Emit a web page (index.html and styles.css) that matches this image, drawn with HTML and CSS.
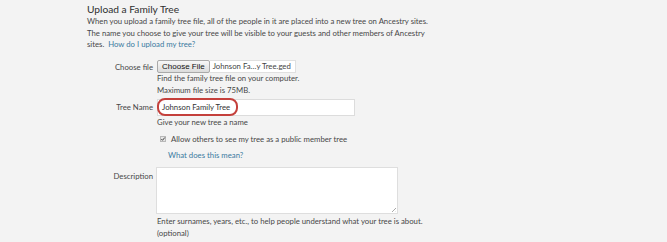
FILE: index.html
```html
<!DOCTYPE html>
<html>
<head>
<meta charset="utf-8">
<link rel="stylesheet" href="styles.css">
</head>
<body>
<div class="page">
  <h2 class="title">Upload a Family Tree</h2>
  <p class="intro">When you upload a family tree file, all of the people in it are placed into a new tree on Ancestry sites.<br>The name you choose to give your tree will be visible to your guests and other members of Ancestry<br>sites.&nbsp; <a class="link" href="#">How do I upload my tree?</a></p>

  <div class="form">
    <div class="label label-file">Choose file</div>
    <div class="field">
      <div class="file">
        <span class="file-btn">Choose File</span>
        <span class="file-name">Johnson Fa…y Tree.ged</span>
      </div>
      <div class="help">Find the family tree file on your computer.</div>
      <div class="help">Maximum file size is 75MB.</div>
    </div>

    <div class="label label-name">Tree Name</div>
    <div class="field">
      <div class="text-input">
        <span class="value">Johnson Family Tree</span>
        <span class="highlight"></span>
      </div>
      <div class="help help-name">Give your new tree a name</div>
      <div class="check-row">
        <span class="checkbox"><svg width="6" height="6" viewBox="0 0 6 6"><rect x="0.5" y="0.5" width="5" height="5" fill="#e6e6e6" stroke="#b8b8b8"/><path d="M1.3 3.1 L2.5 4.3 L4.8 1.5" fill="none" stroke="#444" stroke-width="1"/></svg></span>
        <span>Allow others to see my tree as a public member tree</span>
      </div>
      <div class="check-link"><a class="link" href="#">What does this mean?</a></div>
    </div>

    <div class="label label-desc">Description</div>
    <div class="field">
      <div class="textarea"><span class="grip"></span></div>
      <div class="help help-desc">Enter surnames, years, etc., to help people understand what your tree is about.</div>
      <div class="help help-opt">(optional)</div>
    </div>
  </div>
</div>
</body>
</html>
```

FILE: styles.css
```css
html, body {
  margin: 0;
  padding: 0;
  background: #f3f3f3;
}
body {
  font-family: Lato, "Noto Sans", sans-serif;
  color: #474747;
  font-size: 7.75px;
  overflow: hidden;
}
.page {
  padding: 2px 0 0 87px;
}
.title {
  margin: 0;
  font-size: 10.2px;
  font-weight: 400;
  color: #2f2f2f;
  line-height: 14px;
}
.intro {
  margin: 0;
  line-height: 11.7px;
}
.link {
  color: #3a7aa0;
  text-decoration: none;
}
.form {
  display: grid;
  grid-template-columns: 66px 1fr;
  column-gap: 4px;
  margin-top: 9px;
}
.label {
  text-align: right;
  line-height: 12px;
}
.label-file { padding-top: 0.5px; }
.label-name { padding-top: 5px; }
.label-desc { padding-top: 9px; }
.field {
  display: flex;
  flex-direction: column;
  align-items: flex-start;
}
.help {
  line-height: 11.5px;
}
.file {
  display: flex;
  align-items: stretch;
  height: 13px;
}
.file-btn {
  font-family: "Liberation Sans", Arial, sans-serif;
  font-size: 8px;
  color: #111;
  border: 1px solid #a9a9a9;
  background: linear-gradient(#f7f7f7, #dcdcdc);
  border-radius: 2px;
  padding: 0 4px;
  line-height: 11px;
}
.file-name {
  box-sizing: border-box;
  width: 86px;
  background: #fff;
  border: 1px solid #e0e0e0;
  border-left: none;
  padding: 0 1px 0 3px;
  line-height: 11px;
  white-space: nowrap;
  overflow: hidden;
  color: #444;
}
.text-input {
  position: relative;
  width: 198px;
  height: 17px;
  background: #fff;
  border: 1px solid #dcdcdc;
  margin-top: 3px;
  box-sizing: border-box;
}
.value {
  display: block;
  padding-left: 4px;
  line-height: 15px;
  color: #333;
}
.highlight {
  position: absolute;
  left: -1px;
  top: -2px;
  width: 81px;
  height: 18px;
  border: 2px solid #c4403c;
  border-radius: 8px;
  box-sizing: border-box;
}
.help-name {
  margin-top: 1px;
}
.check-row {
  display: flex;
  align-items: center;
  gap: 5px;
  margin-top: 4.5px;
  margin-left: 3px;
  line-height: 12px;
}
.checkbox {
  display: inline-flex;
  width: 6px;
  height: 6px;
}
.check-link {
  margin-left: 11px;
  margin-top: 3.5px;
  line-height: 12px;
}
.textarea {
  position: relative;
  width: 240px;
  height: 45px;
  margin-left: -1px;
  background: #fff;
  border: 1px solid #dedede;
  margin-top: 6.5px;
}
.grip {
  position: absolute;
  right: 1px;
  bottom: 1px;
  width: 4px;
  height: 4px;
  background: linear-gradient(135deg, transparent 45%, #aaa 50%, transparent 60%, transparent 75%, #aaa 80%, transparent 90%);
}
.help-desc {
  margin-top: 1px;
  line-height: 12px;
  white-space: nowrap;
}
.help-opt {
  line-height: 12px;
}
```
